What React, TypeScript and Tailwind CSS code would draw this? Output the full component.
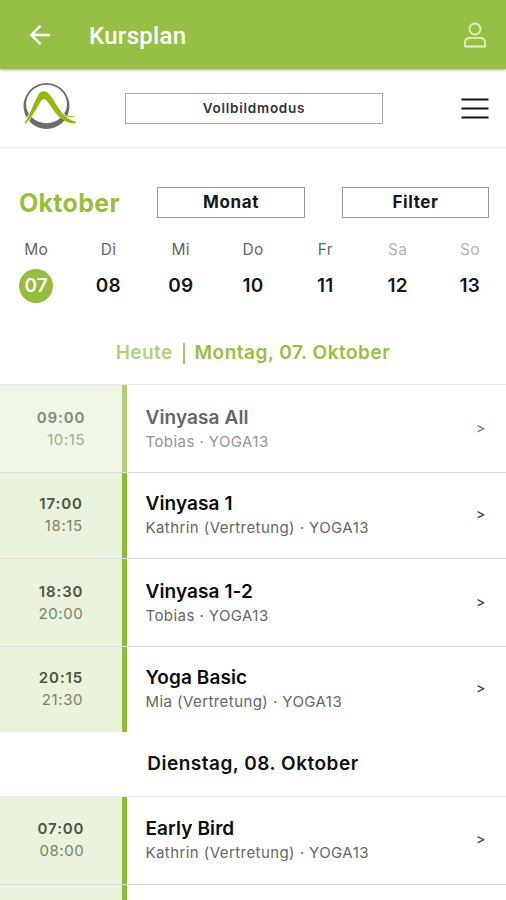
import React from 'react'

const days = [
    { name: 'Mo', date: '07', active: true },
    { name: 'Di', date: '08' },
    { name: 'Mi', date: '09' },
    { name: 'Do', date: '10' },
    { name: 'Fr', date: '11' },
    { name: 'Sa', date: '12', weekend: true },
    { name: 'So', date: '13', weekend: true },
]

type Course = {
    start: string
    end: string
    title: string
    info: string
    past?: boolean
    height: string
    shift: string
}

const monday: Course[] = [
    { start: '09:00', end: '10:15', title: 'Vinyasa All', info: 'Tobias · YOGA13', past: true, height: 'h-[87px]', shift: 'mt-px' },
    { start: '17:00', end: '18:15', title: 'Vinyasa 1', info: 'Kathrin (Vertretung) · YOGA13', height: 'h-[86px]', shift: '-mt-px' },
    { start: '18:30', end: '20:00', title: 'Vinyasa 1-2', info: 'Tobias · YOGA13', height: 'h-[88px]', shift: 'mt-px' },
    { start: '20:15', end: '21:30', title: 'Yoga Basic', info: 'Mia (Vertretung) · YOGA13', height: 'h-[86px]', shift: '-mt-px' },
]

const tuesday: Course[] = [
    { start: '07:00', end: '08:00', title: 'Early Bird', info: 'Kathrin (Vertretung) · YOGA13', height: 'h-[87px]', shift: 'mt-0' },
]

function Logo() {
    return (
        <svg width="54" height="50" viewBox="0 0 54 50" fill="none">
            <path fillRule="evenodd" fill="#6b6c70" d="M23.5 1a23 23 0 1 0 0 46a23 23 0 1 0 0-46zM23.5 2.8a20.5 19.2 0 1 1 0 38.4a20.5 19.2 0 1 1 0-38.4z" />
            <path d="M3 41C8 34 13 18 18 12C21 9 24 10 27 14C34 24 39 37 52 41" stroke="#fff" strokeWidth="4" />
            <path fill="#8fbc0c" d="M1.5 41.5C7 33 11 20 15.500 12.500C17.500 8.500 23 8 26 12C34 21 38 36 52.500 39.500L52.500 41.500C36 41 31 28 24 19C22 16.500 19.500 16.500 18 19C13 28 8 36 3 41.500z" />
            <path d="M38 31C42 34.500 46 35 50.500 34.500" stroke="#9fc63a" strokeWidth="1.200" />
        </svg>
    )
}

function CourseRow({ course, first }: { course: Course; first?: boolean }) {
    return (
        <div className={`flex ${course.height} ${first ? '' : 'border-t border-[#dcdcdc]'}`}>
            <div className={`flex w-[127px] justify-center border-r-[5px] pt-[21px] ${course.past ? 'border-[#b1d077] bg-[#eff6e5]' : 'border-[#8fbc35] bg-[#e9f2db]'}`}>
                <div className={`text-right text-[15px] leading-[22px] ${course.shift}`}>
                    <p className={`font-semibold tracking-[0.9px] ${course.past ? 'text-[#81877b]' : 'text-[#4c5445]'}`}>{course.start}</p>
                    <p className={`tracking-[0.6px] ${course.past ? 'text-[#a3a99c]' : 'text-[#7b8373]'}`}>{course.end}</p>
                </div>
            </div>
            <div className="flex-1 pl-[18.5px] pt-[19px]">
                <div className={course.shift}>
                    <p className={`text-[19px] font-semibold leading-[26px] tracking-[0.1px] ${course.past ? 'text-[#666]' : 'text-[#0c0c0c]'}`}>{course.title}</p>
                    <p className={`text-[15px] leading-[22px] tracking-[0.43px] ${course.past ? 'text-[#949494]' : 'text-[#666]'}`}>{course.info}</p>
                </div>
            </div>
            <div className="w-[30px] pt-[31px]">
                <p className={`text-[14px] font-medium leading-[22px] ${course.shift} ${course.past ? 'text-[#808080]' : 'text-[#444]'}`}>&gt;</p>
            </div>
        </div>
    )
}

export default function App() {
    return (
        <div className="h-[900px] w-[506px] overflow-hidden bg-white font-['Inter',sans-serif] text-[#14181b]">
            <header className="relative flex h-[69px] items-center bg-[#96bf45] pt-[2px] text-white shadow-[0_1px_3px_rgba(0,0,0,0.35)]">
                <svg className="-mt-px ml-[29px]" width="22" height="22" viewBox="0 0 22 22" fill="none" stroke="currentColor" strokeWidth="2.400">
                    <path d="M21 11H2.500M11.500 1.800L2.300 11L11.500 20.200" />
                </svg>
                <h1 className="ml-[38px] flex-1 font-['Roboto',sans-serif] text-[24px] font-medium tracking-[0.3px]">Kursplan</h1>
                <svg className="-mt-px mr-[20px]" width="22" height="26" viewBox="0 0 22 26" fill="none" stroke="#e2f2bd" strokeWidth="1.800">
                    <circle cx="11" cy="7" r="5.500" />
                    <path d="M1 24.500V20.500C1 17.500 3 15.800 6 15.800H16C19 15.800 21 17.500 21 20.500V24.500z" />
                </svg>
            </header>

            <div className="flex h-[79px] items-center border-b border-[#e2e2e2]">
                <div className="ml-[23px] mt-[-2px] w-[102px]">
                    <Logo />
                </div>
                <button className="h-[31px] w-[258px] border border-[#aaa] text-[13.5px] font-semibold tracking-[0.750px] text-[#333]">Vollbildmodus</button>
                <svg className="ml-auto mr-[17px]" width="28" height="22" viewBox="0 0 28 22" stroke="#111" strokeWidth="2">
                    <path d="M0.500 2.500H27.500M0.500 11.500H27.500M0.500 20.500H27.500" />
                </svg>
            </div>

            <section className="h-[237px] border-b border-[#e8e8e8] pt-[38px]">
                <div className="flex h-[32px] items-center">
                    <h2 className="w-[157px] pl-[19px] pt-[3px] text-[25px] font-bold tracking-[0.3px] text-[#96bf3d]">Oktober</h2>
                    <button className="h-[31px] w-[148px] border border-[#999] text-[17px] font-bold leading-none tracking-[0.6px]">Monat</button>
                    <button className="ml-[37px] h-[31px] w-[147px] border border-[#999] text-[17px] font-bold leading-none tracking-[0.6px]">Filter</button>
                </div>
                <div className="mt-[20px] grid grid-cols-7">
                    {days.map((day) => (
                        <div key={day.name} className="flex flex-col items-center">
                            <span className={`text-[15.5px] leading-[24px] tracking-[0.3px] ${day.weekend ? 'text-[#b4b4b4]' : 'text-[#666]'}`}>{day.name}</span>
                            <span className={`mt-[7px] flex h-[34px] w-[34px] items-center justify-center rounded-full pt-px text-[19px] font-semibold tracking-[0.2px] ${day.active ? 'bg-[#94bd3c] text-white' : ''}`}>{day.date}</span>
                        </div>
                    ))}
                </div>
                <div className="mt-[37px] flex items-center justify-center text-[19px] font-semibold leading-[26px] text-[#96bf3d]">
                    <span className="tracking-[0.4px] text-[#b3d178]">Heute</span>
                    <span className="mx-[10px] h-[21px] w-[2px] bg-[#a3c756]" />
                    <span className="tracking-[0.5px]">Montag, 07. Oktober</span>
                </div>
            </section>

            {monday.map((course, i) => (
                <CourseRow key={course.start} course={course} first={i === 0} />
            ))}

            <h3 className="flex h-[65px] items-center justify-center border-b border-[#ececec] text-[19px] font-semibold tracking-[0.5px] text-[#111]">Dienstag, 08. Oktober</h3>

            {tuesday.map((course) => (
                <CourseRow key={course.start} course={course} first />
            ))}
            <div className="flex h-[20px] border-t border-[#dcdcdc]">
                <div className="w-[127px] border-r-[5px] border-[#8fbc35] bg-[#e9f2db]" />
            </div>
        </div>
    )
}
